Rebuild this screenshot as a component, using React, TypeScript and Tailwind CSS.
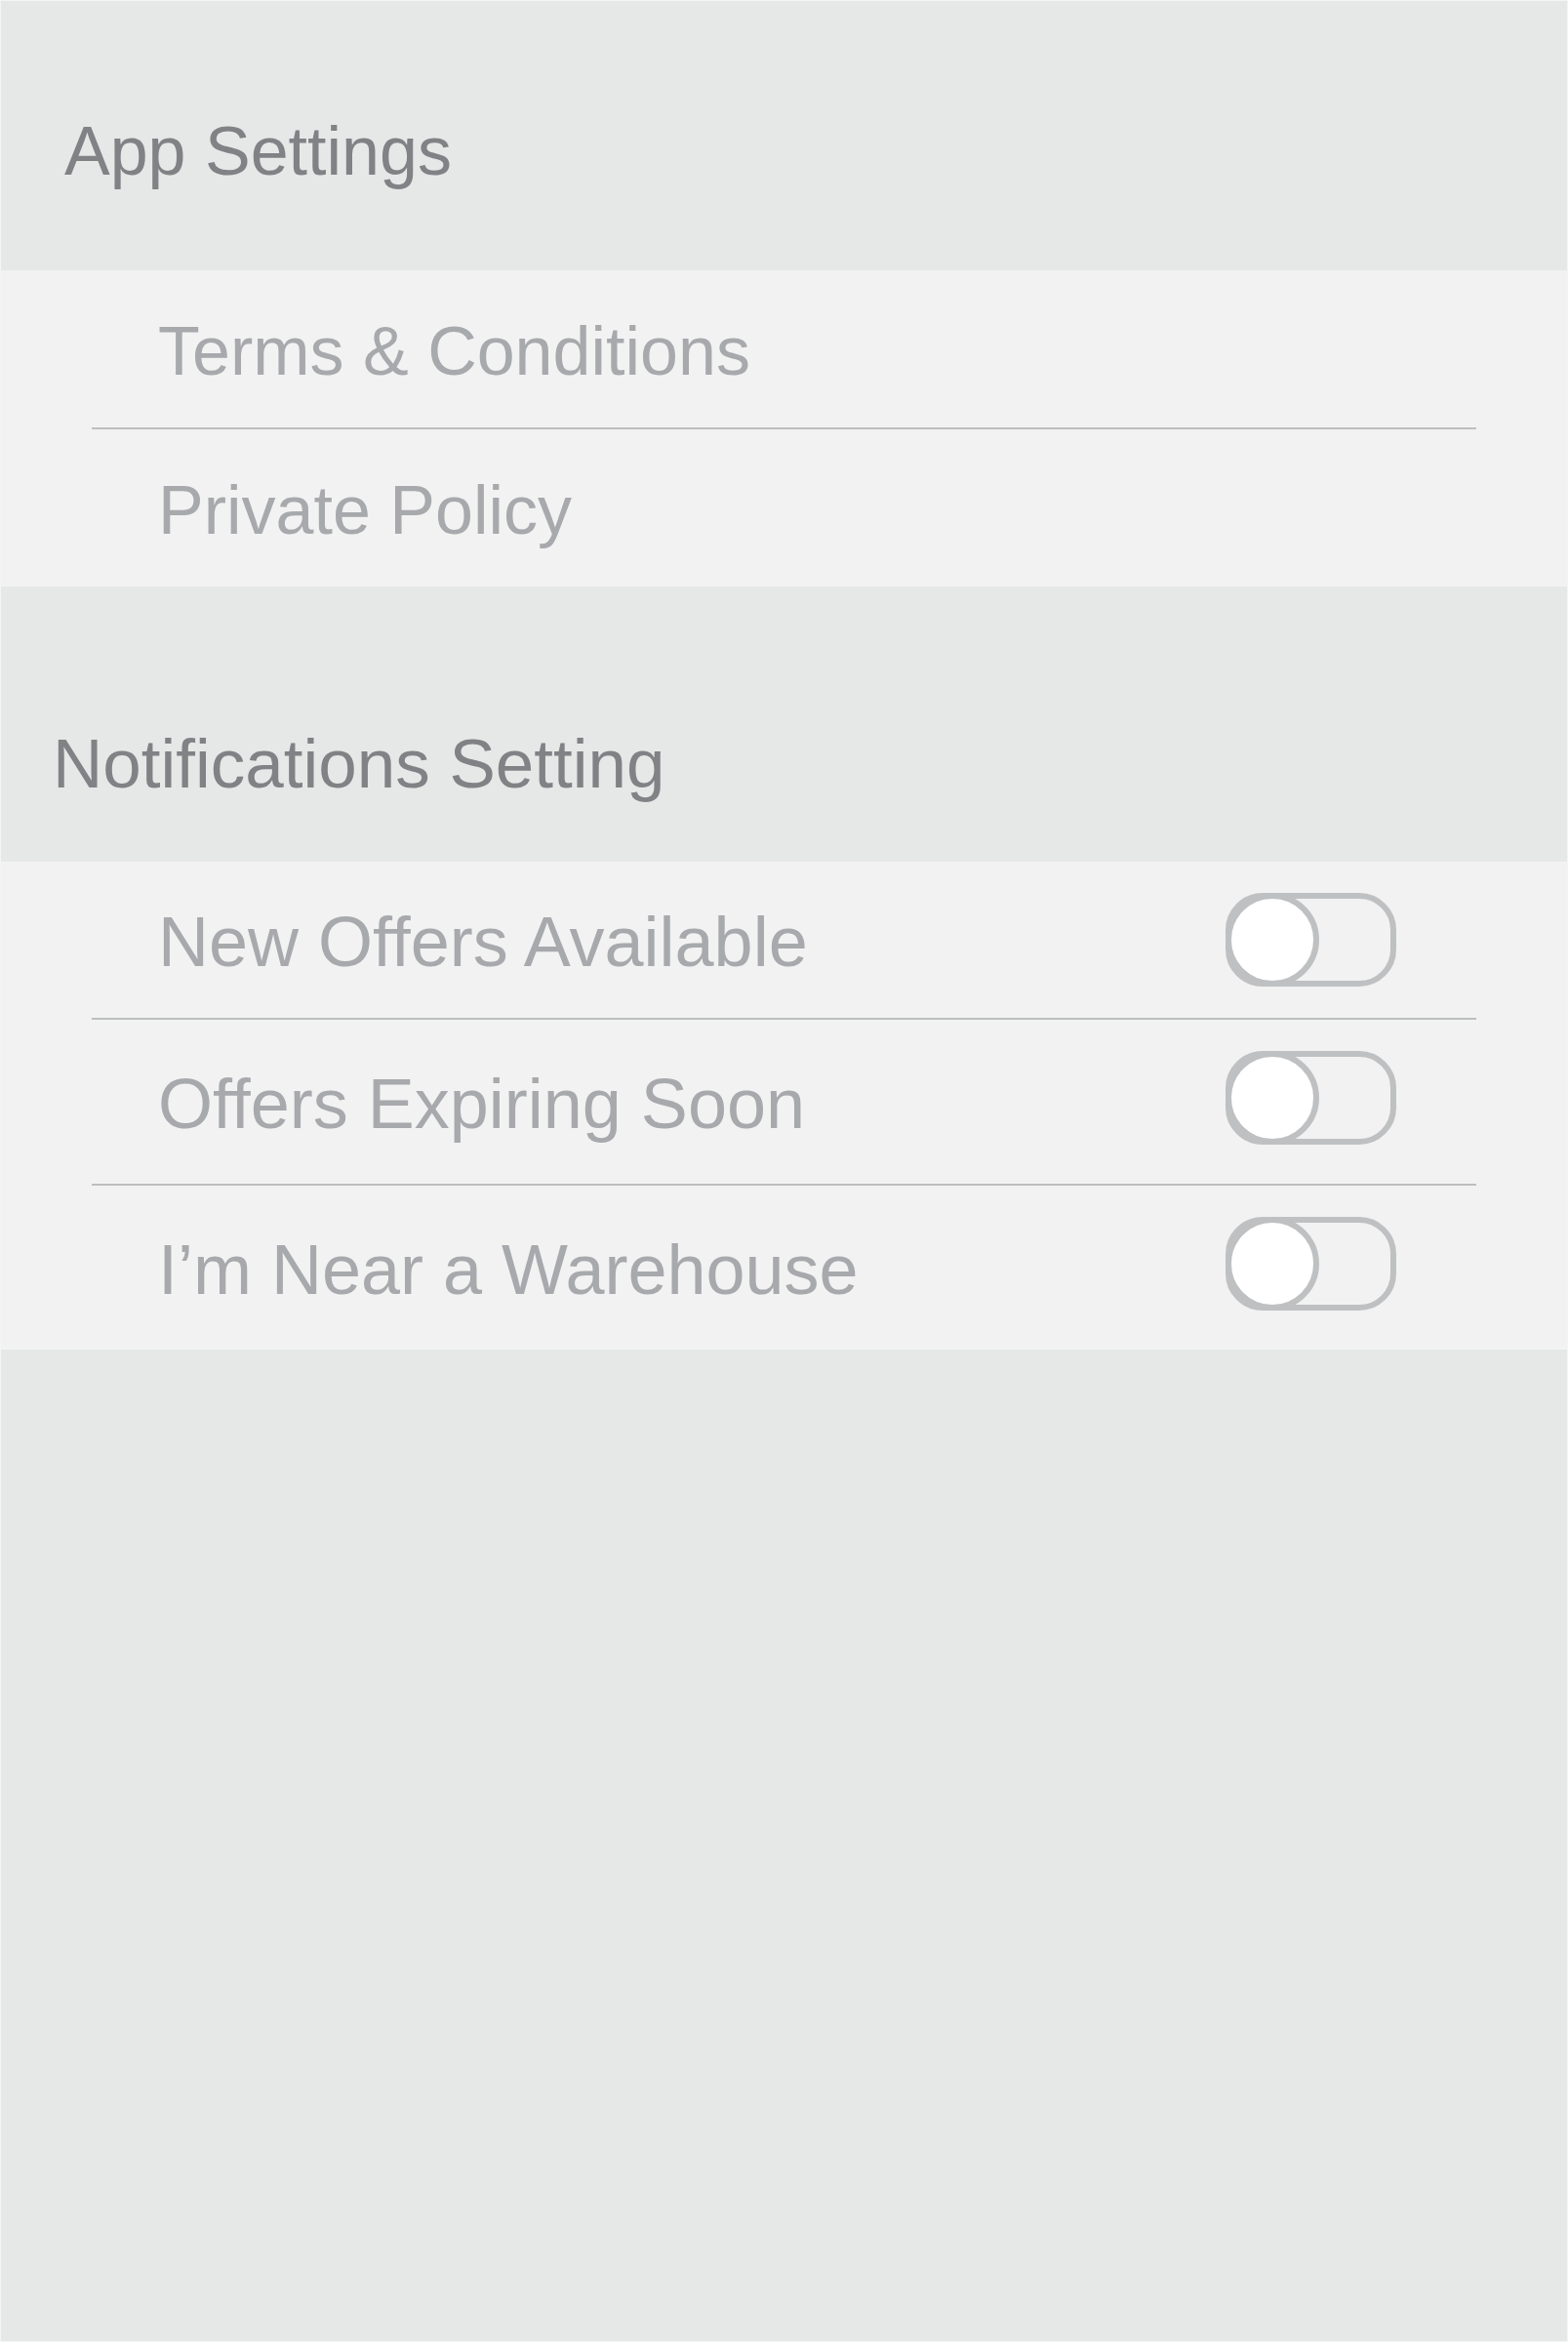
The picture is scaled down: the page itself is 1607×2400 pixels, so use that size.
import React, { useState } from 'react';

const appLinks = ['Terms & Conditions', 'Private Policy'];

const notificationItems = [
  { id: 'new-offers', label: 'New Offers Available', row: 'h-[160px]', toggle: '' },
  { id: 'expiring', label: 'Offers Expiring Soon', row: 'h-[168px]', toggle: '-mt-[9px]' },
  { id: 'warehouse', label: 'I’m Near a Warehouse', row: 'h-[168px]', toggle: '-mt-[9px]' },
];

const Toggle = ({ on, onClick, className }: { on: boolean; onClick: () => void; className?: string }) => (
  <button type="button" onClick={onClick} className={`relative w-[175px] h-[96px] shrink-0 ${className ?? ''}`}>
    <span className="absolute inset-0 rounded-[38px] border-[6px] border-[#bfc0c2] bg-[#f2f2f2]" />
    <span
      className={`absolute top-0 w-[96px] h-[96px] rounded-full border-[6px] border-[#bfc0c2] bg-white ${
        on ? 'right-0' : 'left-0'
      }`}
    />
  </button>
);

const Divider = () => <div className="mx-[93px] h-[2px] bg-[#bdbec0]" />;

const App = () => {
  const [toggles, setToggles] = useState<Record<string, boolean>>({});

  return (
    <div className="min-h-[2400px] w-[1607px] bg-[#e6e8e7] border border-[#f3f4f4] font-['Liberation_Sans',Arial,sans-serif]">
      {/* App Settings header */}
      <div className="h-[276px] pt-[119px] pl-[65px]">
        <h2 className="text-[70px] leading-[70px] text-[#808285]">App Settings</h2>
      </div>

      <div className="bg-[#f2f2f2]">
        {appLinks.map((link, i) => (
          <React.Fragment key={link}>
            {i > 0 && <Divider />}
            <div className="h-[161px] flex items-center pl-[161px] pt-[5px]">
              <span className="text-[70px] leading-[70px] text-[#a7a9ac]">{link}</span>
            </div>
          </React.Fragment>
        ))}
      </div>

      {/* Notifications header */}
      <div className="h-[282px] pt-[147px] pl-[53px]">
        <h2 className="text-[71px] leading-[70px] text-[#808285]">Notifications Setting</h2>
      </div>

      <div className="bg-[#f2f2f2]">
        {notificationItems.map((item, i) => (
          <React.Fragment key={item.id}>
            {i > 0 && <Divider />}
            <div className={`${item.row} flex items-center justify-between pl-[161px] pr-[175px]`}>
              <span className="text-[72px] leading-[70px] text-[#a7a9ac] pt-[3px]">{item.label}</span>
              <Toggle
                className={item.toggle}
                on={!!toggles[item.id]}
                onClick={() => setToggles(t => ({ ...t, [item.id]: !t[item.id] }))}
              />
            </div>
          </React.Fragment>
        ))}
      </div>
    </div>
  );
};

export default App;
